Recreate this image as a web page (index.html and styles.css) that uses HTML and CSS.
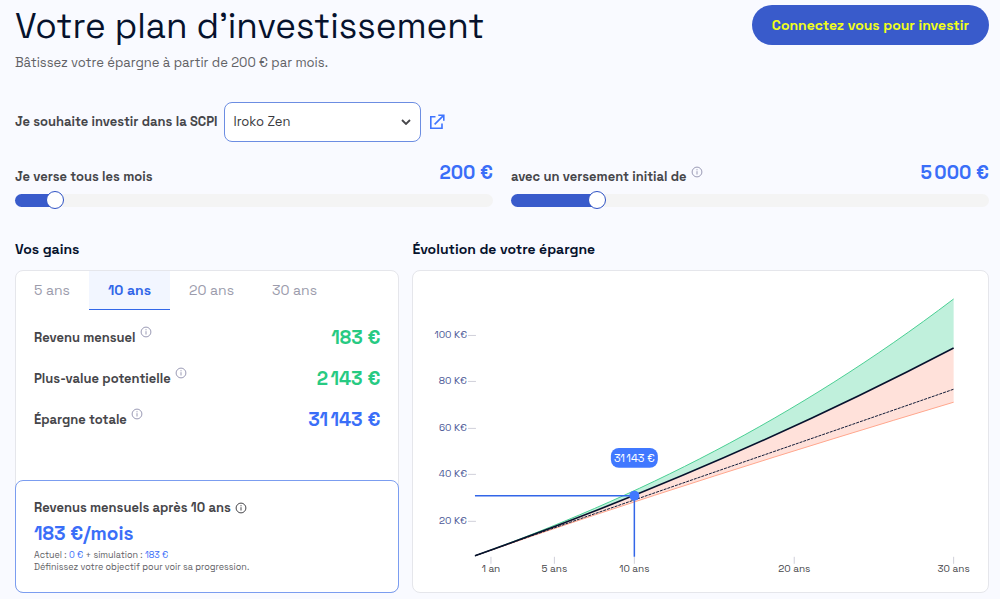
FILE: index.html
```html
<!DOCTYPE html>
<html lang="fr">
<head>
<meta charset="utf-8">
<meta name="viewport" content="width=device-width, initial-scale=1">
<title>Votre plan d’investissement</title>
<link rel="stylesheet" href="styles.css">
</head>
<body>
<svg class="symbols" aria-hidden="true">
  <symbol id="info" viewBox="0 0 12 12">
    <circle cx="6" cy="6" r="4.9" fill="none" stroke="currentColor" stroke-width="1"/>
    <path d="M6 5.2V8.5M6 3.2V4.3" fill="none" stroke="currentColor" stroke-width="1"/>
  </symbol>
</svg>
<main class="plan">
  <header class="plan-header">
    <div>
      <h1 class="title">Votre plan d’investissement</h1>
      <p class="subtitle">Bâtissez votre épargne à partir de 200 € par mois.</p>
    </div>
    <button class="cta" type="button">Connectez vous pour investir</button>
  </header>

  <div class="scpi">
    <label class="label" for="scpi">Je souhaite investir dans la SCPI</label>
    <span class="select-box">
      <select class="select" id="scpi"><option>Iroko Zen</option></select>
      <svg class="chevron" viewBox="0 0 10 6" aria-hidden="true"><path d="M1 1l4 4 4-4" fill="none" stroke="#46464a" stroke-width="1.8"/></svg>
    </span>
    <a class="external" href="#" aria-label="Voir la SCPI">
      <svg viewBox="0 0 16 16" aria-hidden="true"><path d="M6.5 2.8H1.8v11.4H13V9.5M9.3 1.2h5.5v5.5M14.6 1.4L5.6 10.4" fill="none" stroke="currentColor" stroke-width="1.6"/></svg>
    </a>
  </div>

  <div class="sliders">
    <div class="slider">
      <div class="slider-head">
        <label class="label" for="monthly">Je verse tous les mois</label>
        <output class="amount" for="monthly">200 €</output>
      </div>
      <input class="range" id="monthly" type="range" min="0" max="3000" value="200" style="--fill:8%">
    </div>
    <div class="slider">
      <div class="slider-head">
        <span class="with-info"><label class="label" for="initial">avec un versement initial de</label><svg class="info"><use href="#info"/></svg></span>
        <output class="amount" for="initial">5&#8239;000 €</output>
      </div>
      <input class="range" id="initial" type="range" min="0" max="30000" value="5000" style="--fill:18%">
    </div>
  </div>

  <div class="results">
    <section class="column">
      <h2 class="heading">Vos gains</h2>
      <div class="card gains">
        <div class="tabs" role="tablist">
          <button class="tab" type="button" role="tab">5 ans</button>
          <button class="tab tab-active" type="button" role="tab" aria-selected="true">10 ans</button>
          <button class="tab" type="button" role="tab">20 ans</button>
          <button class="tab" type="button" role="tab">30 ans</button>
        </div>
        <dl class="figures">
          <div class="figure"><dt class="label with-info">Revenu mensuel<svg class="info"><use href="#info"/></svg></dt><dd class="amount green">183 €</dd></div>
          <div class="figure"><dt class="label with-info">Plus-value potentielle<svg class="info"><use href="#info"/></svg></dt><dd class="amount green">2&#8239;143 €</dd></div>
          <div class="figure"><dt class="label with-info">Épargne totale<svg class="info"><use href="#info"/></svg></dt><dd class="amount">31&#8239;143 €</dd></div>
        </dl>
        <div class="goal">
          <h3 class="label goal-title">Revenus mensuels après 10 ans<svg class="info-inline"><use href="#info"/></svg></h3>
          <p class="amount">183 €/mois</p>
          <p class="note">Actuel : <span class="value">0 €</span> + simulation : <span class="value">183 €</span></p>
          <p class="note">Définissez votre objectif pour voir sa progression.</p>
        </div>
      </div>
    </section>
    <section class="column">
      <h2 class="heading">Évolution de votre épargne</h2>
      <div class="card">
        <svg class="chart" viewBox="0 0 575 321" role="img" aria-label="Évolution de votre épargne sur 30 ans">
          <path fill="#c0f0dc" d="M62 285C221.7 227.4 381.3 149.2 541 28V77C381.3 160.4 221.7 228.3 62 285z"/>
          <path fill="#ffe1da" d="M62 285C221.7 228.3 381.3 160.4 541 77V131.3C381.3 179.1 221.7 229.3 62 285z"/>
          <path class="line" stroke="#4bcf94" d="M62 285C221.7 227.4 381.3 149.2 541 28"/>
          <path class="line" stroke="#ffa78e" d="M62 285C221.7 229.3 381.3 179.1 541 131.3"/>
          <path class="line" stroke="#101a36" stroke-dasharray="3 1" d="M62 285C221.7 228.4 381.3 174 541 118.3"/>
          <path class="line main-line" d="M62 285C221.7 228.3 381.3 160.4 541 77"/>
          <path class="ticks" d="M55 64.5h8M55 110.5h8M55 157.5h8M55 203.5h8M55 250.5h8M78 286v7M141.5 286v7M221.5 286v7M381.5 286v7M541 286v7"/>
          <path stroke="#3266e8" stroke-width="1.5" fill="none" d="M62 224.8H221.5V286"/>
          <circle cx="221.5" cy="224.8" r="5" fill="#4078ff"/>
          <rect x="198" y="177" width="47" height="20" rx="8" fill="#4078ff"/>
          <text class="tip" x="221.5" y="191">31&#8239;143 €</text>
          <g class="y-axis">
            <text x="54" y="67">100 K€</text>
            <text x="54" y="113">80 K€</text>
            <text x="54" y="160">60 K€</text>
            <text x="54" y="206">40 K€</text>
            <text x="54" y="253">20 K€</text>
          </g>
          <g class="x-axis">
            <text x="78" y="301">1 an</text>
            <text x="141.5" y="301">5 ans</text>
            <text x="221.5" y="301">10 ans</text>
            <text x="381.5" y="301">20 ans</text>
            <text x="541" y="301">30 ans</text>
          </g>
        </svg>
      </div>
    </section>
  </div>
</main>
</body>
</html>
```
FILE: styles.css
```css
* { box-sizing: border-box; margin: 0; }

body {
  background: #f9faff;
  color: #46464a;
  font-family: "Space Grotesk", Inter, sans-serif;
  font-size: 13px;
  line-height: 16px;
}

button, select { font: inherit; }
.symbols { display: none; }

.plan { padding: 5px 11px 6px 15px; }

.plan-header { display: flex; justify-content: space-between; align-items: flex-start; }
.title { color: #06122d; font-size: 35px; font-weight: 400; line-height: 42px; }
.subtitle { color: #626266; margin-top: 8px; }
.cta {
  height: 40px;
  padding: 0 20px;
  border: 0;
  border-radius: 20px;
  background: #395bcb;
  color: #f1ff19;
  font-size: 14px;
  font-weight: 600;
}

.label { color: #46464a; font-size: 13px; font-weight: 600; }

.scpi { display: flex; align-items: center; margin-top: 31px; }
.select-box { position: relative; width: 197px; margin: 0 8px 0 7px; }
.select {
  display: block;
  width: 100%;
  height: 40px;
  padding: 0 28px 0 8px;
  border: 1px solid #6c8de2;
  border-radius: 8px;
  background: #fff;
  color: #39393d;
  appearance: none;
}
.chevron { position: absolute; right: 10px; top: 17px; width: 10px; height: 6px; }
.external { color: #3f74ff; }
.external svg { display: block; width: 16px; height: 16px; }

.sliders { display: grid; grid-template-columns: 1fr 1fr; gap: 18px; margin-top: 19px; }
.slider-head { display: flex; justify-content: space-between; height: 28px; }
.slider-head .label { line-height: 32px; }
.slider-head .amount { line-height: 24px; }
.amount { color: #3a6ef8; font-size: 19px; font-weight: 600; line-height: 24px; }
.green { color: #27ca82; }

.range {
  display: block;
  width: 100%;
  height: 22px;
  appearance: none;
  background: none;
}
.range::-webkit-slider-runnable-track {
  height: 13px;
  border-radius: 7px;
  background: linear-gradient(90deg, #395bcb var(--fill), #f4f4f4 var(--fill));
}
.range::-webkit-slider-thumb {
  appearance: none;
  width: 18px;
  height: 18px;
  margin-top: -3px;
  border: 1px solid #2e52c4;
  border-radius: 50%;
  background: #fff;
}

.with-info { display: flex; align-items: flex-start; gap: 4px; }
.info { flex: none; width: 12px; height: 12px; color: #9a9ab5; }
.slider-head .info { margin-top: 5px; }
.info-inline { width: 12px; height: 12px; margin-left: 4px; vertical-align: -2px; }

.results { display: grid; grid-template-columns: 2fr 3fr; gap: 13px; margin-top: 30px; }
.column { display: flex; flex-direction: column; min-width: 0; }
.heading { color: #06122d; font-size: 14px; font-weight: 600; line-height: 16px; margin-bottom: 13px; }
.card { flex: 1; border: 1px solid #e5e6eb; border-radius: 8px; background: #fff; }

.gains { display: flex; flex-direction: column; }
.tabs { display: flex; }
.tab {
  height: 39px;
  padding: 0 19px 1px;
  border: 0;
  border-bottom: 1px solid transparent;
  background: none;
  color: #9c9cac;
  font-size: 14px;
}
.tab-active { border-bottom-color: #3267e8; background: #f2f6ff; color: #3267e8; font-weight: 600; }
.tab:first-child { padding-left: 18px; }

.figures { padding: 16px 18px; display: grid; gap: 17px; }
.figure { display: flex; justify-content: space-between; align-items: center; }
.figure .label { line-height: 24px; }

.goal {
  margin: auto -1px -1px;
  padding: 19px 18px;
  border: 1px solid #7b9df0;
  border-radius: 8px;
}
.goal-title { line-height: 16px; margin-bottom: 6px; }
.goal .amount { margin-bottom: 3px; }
.note { color: #626266; font-size: 9px; line-height: 12px; }
.value { color: #3a6ef8; }

.chart { display: block; width: 100%; height: auto; font-size: 10px; }
.line { fill: none; stroke-width: 1; }
.main-line { stroke: #06122d; stroke-width: 1.6; }
.ticks { fill: none; stroke: #d0d0da; stroke-width: 1; }
.tip { fill: #fff; font-size: 11px; text-anchor: middle; }
.y-axis { fill: #4b5796; text-anchor: end; }
.x-axis { fill: #46464a; text-anchor: middle; }
```
